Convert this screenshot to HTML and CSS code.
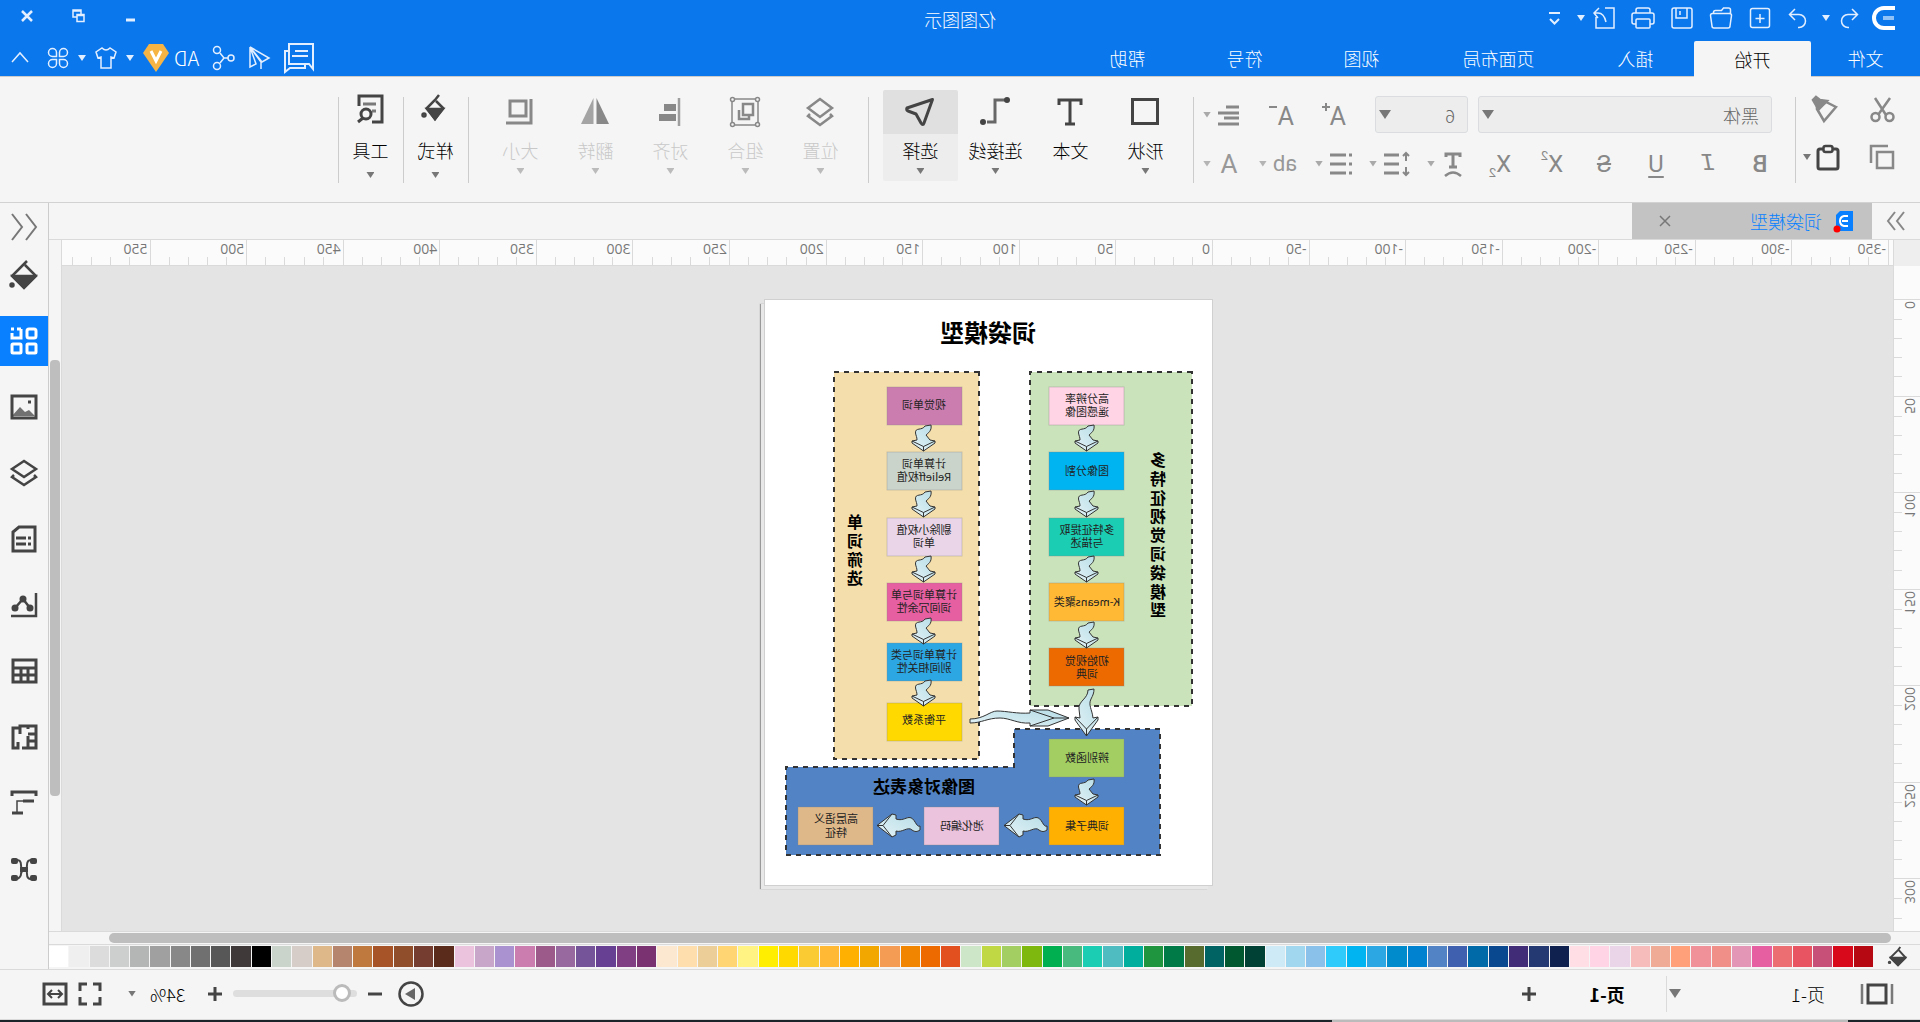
FILE: index.html
```html
<!DOCTYPE html>
<html lang="zh-CN">
<head>
<meta charset="utf-8">
<title>亿图图示</title>
<link rel="stylesheet" href="styles.css">
</head>
<body>
<div class="app">
  <header class="top">
    <div class="titlebar">
      <div class="quick">
        <svg class="ico logo" viewBox="0 0 24 24" width="24" height="24"><path d="M1 2h11a10 10 0 0 1 0 20H1" stroke-width="4"/><path d="M2 12h11" stroke-width="4" opacity=".55"/></svg>
        <button class="qb" aria-label="撤销"><svg class="ico" stroke-width="1.5" viewBox="0 0 24 24" width="24" height="24"><path d="M9 3L3.500 8.500 9 14M4 8.500h9a6.500 6.500 0 0 1 0 13h-1"/></svg></button>
        <button class="arr light" aria-label="撤销列表"></button>
        <button class="qb redo" aria-label="重做"><svg class="ico" stroke-width="1.5" viewBox="0 0 24 24" width="24" height="24"><path d="M15 3l5.500 5.500L15 14M20 8.500h-9a6.500 6.500 0 0 0 0 13h1"/></svg></button>
        <button class="qb" aria-label="新建"><svg class="ico" stroke-width="1.5" viewBox="0 0 24 24" width="24" height="24"><rect x="2.500" y="2.500" width="19" height="19" rx="2"/><path d="M12 8v9M7.500 12.500h9"/></svg></button>
        <button class="qb" aria-label="打开"><svg class="ico" stroke-width="1.5" viewBox="0 0 24 24" width="24" height="24"><path d="M2.500 8V4q0-2 2-2h5l2 2.500h6q2 0 2 2V8M3 20L1.500 9.500q0-2 2-2h17q2 0 2 2L21 20q0 2-2 2H5q-2 0-2-2z"/></svg></button>
        <button class="qb" aria-label="保存"><svg class="ico" stroke-width="1.5" viewBox="0 0 24 24" width="24" height="24"><rect x="2" y="2" width="20" height="20" rx="2"/><path d="M7 2v10h11V2M14 5v4"/></svg></button>
        <button class="qb" aria-label="打印"><svg class="ico" stroke-width="1.5" viewBox="0 0 24 24" width="24" height="24"><path d="M5 7V4q0-2 2-2h10q2 0 2 2v3M5 18H3q-2 0-2-2V9q0-2 2-2h18q2 0 2 2v7q0 2-2 2h-2"/><rect x="5" y="13" width="14" height="9" rx="1"/></svg></button>
        <button class="qb" aria-label="导出"><svg class="ico" stroke-width="1.5" viewBox="0 0 24 24" width="24" height="24"><path d="M11 2H2v20h18V11M22 7h-4q-6 0-8 9M17 2l5 5-4 5"/></svg></button>
        <button class="arr light" aria-label="导出列表"></button>
        <button class="qb last" aria-label="自定义"><svg class="ico" viewBox="0 0 24 24" width="24" height="24" stroke-width="2"><path d="M7 7h11M8 13l4.500 4.500L17 13"/></svg></button>
      </div>
      <h1 class="apptitle">亿图图示</h1>
      <div class="winbtns">
        <button aria-label="最小化"><svg class="ico" viewBox="0 0 16 16" width="16" height="16"><path d="M4 12h9" stroke-width="3"/></svg></button>
        <button aria-label="还原"><svg class="ico" viewBox="0 0 16 16" width="16" height="16" stroke-width="1.5"><path d="M6 6V2h8v7h-4M3 6.500h7v7H3zM3 7.500h7M6 3h8"/></svg></button>
        <button aria-label="关闭"><svg class="ico" viewBox="0 0 16 16" width="16" height="16"><path d="M3 3l10 10M13 3L3 13" stroke-width="2.500"/></svg></button>
      </div>
    </div>
    <div class="menurow">
      <nav class="tabs">
        <button>文件</button><button class="on">开始</button><button>插入</button><button class="wide">页面布局</button><button>视图</button><button>符号</button><button>帮助</button>
      </nav>
      <div class="tools">
        <button class="sp" aria-label="评论"><svg class="ico" viewBox="0 0 32 32" width="32" height="32" stroke-width="2"><path d="M2 2h24v20H6l-4 5zM7 9h13M7 14h16M26 9h4v21l-5-4H10v-4"/></svg></button>
        <button class="sp" aria-label="发送"><svg class="ico" viewBox="0 0 24 28" width="24" height="28" stroke-width="1.5"><path d="M21 3L2 14l7 4zM21 3v20l-6-3zM21 3L10 18v7"/></svg></button>
        <button class="sp" aria-label="分享"><svg class="ico" viewBox="0 0 24 28" width="24" height="28" stroke-width="1.5"><circle cx="4" cy="14" r="3"/><circle cx="18" cy="6" r="3.500"/><circle cx="18" cy="22" r="3.500"/><path d="M7 14h4l4-5M11 14l4 5"/></svg></button>
        <button class="ad">AD</button>
        <button aria-label="会员"><svg viewBox="0 0 28 28" width="28" height="28"><path d="M7 0h14l6 9-13 19L1 9z" fill="#f6b445"/><path d="M9 7l5 10 5-10" fill="none" stroke="#fff" stroke-width="3"/></svg></button>
        <button class="arr light" aria-label="会员列表"></button>
        <button aria-label="主题"><svg class="ico" viewBox="0 0 24 24" width="24" height="24" stroke-width="1.5"><path d="M8 2q4 4 8 0l6 4-2 6-3-1v11H7V11l-3 1-2-6z"/></svg></button>
        <button class="arr light" aria-label="主题列表"></button>
        <button class="apps" aria-label="应用"><svg class="ico" viewBox="0 0 24 24" width="24" height="24" stroke-width="1.5"><path d="M10.500 10.500H6.500a4 4 0 1 1 4-4zM13.500 10.500v-4a4 4 0 1 1 4 4zM10.500 13.500v4a4 4 0 1 1-4-4zM13.500 13.500h4a4 4 0 1 1-4 4z"/></svg></button>
        <button aria-label="收起"><svg class="ico" viewBox="0 0 20 20" width="20" height="20" stroke-width="1.5"><path d="M2 14l8-9 8 9"/></svg></button>
      </div>
    </div>
  </header>

  <div class="ribbon">
    <section class="clip">
      <button class="ib" aria-label="剪切"><svg class="ico" viewBox="0 0 26 26" width="26" height="26" stroke-width="2.500"><path d="M5 1l12 17M20 1L9 18"/><circle cx="5.500" cy="20" r="4"/><circle cx="19.500" cy="20" r="4"/></svg></button>
      <button class="ib" aria-label="格式刷"><svg class="ico" viewBox="0 0 28 28" width="28" height="28" stroke-width="2.500"><path d="M4 11l10-5 9 7-7 12z"/><path d="M13 5l7-1 4-3 3 3-3 5-2 5z" fill="currentColor"/></svg></button>
      <button class="ib" aria-label="复制"><svg class="ico" viewBox="0 0 26 26" width="26" height="26" stroke-width="2.500"><path d="M2 8h16v16H2z"/><path d="M7 2h17v17"/></svg></button>
      <button class="ib dark" aria-label="粘贴"><svg class="ico" viewBox="0 0 26 26" width="26" height="26" stroke-width="3"><rect x="3" y="5" width="20" height="20" rx="2"/><rect x="8.500" y="2" width="9" height="6" rx="2" fill="#f5f5f5" stroke-width="2.500"/></svg><span class="arr"></span></button>
    </section>
    <section class="font">
      <div class="frow">
        <label class="combo fam"><select aria-label="字体"><option>黑体</option></select></label>
        <label class="combo size"><select aria-label="字号"><option>6</option></select></label>
        <button class="tb" aria-label="增大字号"><svg class="ico" viewBox="0 0 28 28" width="28" height="28"><text x="3" y="24" class="let">A</text><path d="M19 6h8M23 2v8"/></svg></button>
        <button class="tb" aria-label="减小字号"><svg class="ico" viewBox="0 0 28 28" width="28" height="28"><text x="3" y="24" class="let">A</text><path d="M20 6h8"/></svg></button>
        <button class="split gap" aria-label="对齐文本"><svg class="ico" viewBox="0 0 24 24" width="24" height="24" stroke-width="3"><path d="M2 4h13M2 10h21M2 15h15M2 21h21"/></svg><span class="arr"></span></button>
      </div>
      <div class="frow">
        <button class="tb bold">B</button>
        <button class="tb ital">I</button>
        <button class="tb und">U</button>
        <button class="tb strike">S</button>
        <button class="tb">X<sup>2</sup></button>
        <button class="tb">X<sub>2</sub></button>
        <button class="split tsp" aria-label="文字效果"><svg class="ico" viewBox="0 0 24 28" width="24" height="28"><path d="M5 7V4h14v3M12 4v13M8 17h8" stroke-width="3"/><path d="M4 26q8-7 16 0" stroke-width="2.500"/></svg><span class="arr"></span></button>
        <button class="split" aria-label="行距"><svg class="ico" viewBox="0 0 28 28" width="28" height="28"><path d="M12 5h15M12 14h15M12 23h15" stroke-width="3"/><path d="M5 3v8M2 6l3-3 3 3M5 25v-8M2 22l3 3 3-3"/></svg><span class="arr"></span></button>
        <button class="split" aria-label="项目符号"><svg class="ico" viewBox="0 0 24 28" width="24" height="28" stroke-width="3"><path d="M1 5h3M1 14h3M1 23h3M7 5h16M7 14h16M7 23h16"/></svg><span class="arr"></span></button>
        <button class="split lite"><span>ab</span><span class="arr"></span></button>
        <button class="split lite"><span class="biga">A</span><span class="arr"></span></button>
      </div>
    </section>
    <section class="bigs dark">
      <button><svg class="ico" viewBox="0 0 30 30" width="30" height="30" stroke-width="3"><path d="M2.500 2.500h25v24h-25z"/></svg><span>形状</span><i class="arr"></i></button>
      <button><svg class="ico" viewBox="0 0 30 30" width="30" height="30" stroke-width="3"><path d="M4 8V3h22v5M15 3v24M10 27h10"/></svg><span>文本</span></button>
      <button><svg class="ico" viewBox="0 0 30 30" width="30" height="30"><path d="M5 3h10v22h8" opacity=".8" stroke-width="3"/><circle cx="3" cy="3" r="3" fill="currentColor" stroke="none"/><circle cx="27" cy="25" r="3" fill="currentColor" stroke="none"/></svg><span>连接线</span><i class="arr"></i></button>
      <button class="on"><svg class="ico" viewBox="0 0 30 30" width="30" height="30" stroke-width="3"><path d="M2.500 2.500L28 11q1 2-1 3l-8 3-5 9q-2 3-3 0z" stroke-linejoin="round"/></svg><span>选择</span><i class="arr"></i></button>
    </section>
    <section class="bigs faint">
      <button><svg class="ico" viewBox="0 0 30 30" width="30" height="30" stroke-width="2.500"><path d="M15 2L27 11 15 20 3 11z"/><path d="M5 17l-2 2 12 9 12-9-2-2"/></svg><span>位置</span><i class="arr"></i></button>
      <button><svg class="ico" viewBox="0 0 30 30" width="30" height="30"><path d="M2 2h26v26H2z" stroke-width="1.500"/><path d="M7 7h10v11H7z" stroke-width="2.500"/><path d="M21 13v9H11v-3" stroke-width="2.500"/><g fill="#f5f5f5" stroke-width="1.500"><circle cx="2.500" cy="2.500" r="2"/><circle cx="27.500" cy="2.500" r="2"/><circle cx="2.500" cy="27.500" r="2"/><circle cx="27.500" cy="27.500" r="2"/></g></svg><span>组合</span><i class="arr"></i></button>
      <button><svg class="ico" viewBox="0 0 30 30" width="30" height="30"><path d="M6 1v28" opacity=".8" stroke-width="2.500"/><path d="M9 7h12v7H9zM9 17h17v7H9z" fill="currentColor" stroke="none"/></svg><span>对齐</span><i class="arr"></i></button>
      <button><svg viewBox="0 0 30 30" width="30" height="30" fill="currentColor"><path d="M1 27L13.500 1v26z"/><path d="M29 27L16.500 1v26z" opacity=".75"/></svg><span>翻转</span><i class="arr"></i></button>
      <button><svg class="ico" viewBox="0 0 30 30" width="30" height="30" stroke-width="3"><path d="M9 4h16v15H9z"/><path d="M4 2v24h25"/></svg><span>大小</span><i class="arr"></i></button>
    </section>
    <section class="bigs dark slim">
      <button><svg class="ico" viewBox="0 0 30 30" width="30" height="30" stroke-width="2.500"><path d="M11 1l4 5 8 8-8 11-8-11 7-7"/><path d="M7 15l8 10 8-10z" fill="currentColor"/><circle cx="26" cy="21" r="1.500"/></svg><span>样式</span><i class="arr"></i></button>
    </section>
    <section class="bigs dark slim">
      <button><svg class="ico" viewBox="0 0 30 30" width="30" height="30" stroke-width="3"><path d="M26 12V2H3v26h10"/><path d="M9 10h13M9 17h4" opacity=".7"/><circle cx="19" cy="20" r="5"/><path d="M22 24l5 4"/></svg><span>工具</span><i class="arr"></i></button>
    </section>
  </div>

  <div class="middle">
    <main class="work">
      <div class="doctabs">
        <button class="fold" aria-label="展开"><svg class="ico" viewBox="0 0 20 20" width="20" height="20"><path d="M2 1l7 9-7 9M11 1l7 9-7 9" stroke-width="2"/></svg></button>
        <div class="doctab">
          <svg viewBox="0 0 20 22" width="20" height="22"><path d="M1 1h13l4 4v16H1z" fill="#0880ff"/><path d="M6 6h4q4 1 4 5t-4 5H6M6 11h6" fill="none" stroke="#fff" stroke-width="2"/><circle cx="17" cy="19" r="3.500" fill="#f00"/></svg>
          <span>词袋模型</span>
          <button aria-label="关闭文档"><svg class="ico" viewBox="0 0 12 12" width="12" height="12"><path d="M1 1l10 10M11 1L1 11" stroke-width="1.500"/></svg></button>
        </div>
      </div>
      <div class="rulerrow"><div class="corner"></div><div class="hruler"></div><div class="sbtop"></div></div>
      <div class="canvasrow">
        <div class="vruler"></div>
        <div class="canvas">
          <div class="page">
            <svg class="diagram" viewBox="0 0 447 585" width="447" height="585">
              <defs>
                <linearGradient id="g" x1="0" y1="0" x2="1" y2="1"><stop offset="0" stop-color="#b6dce6"/><stop offset="1" stop-color="#e4f3f7"/></linearGradient>
                <g id="down" class="arrow"><path d="M4 0l6 1c3 5 10 1 9.500 7-.5 3-1.500 4-1.500 7l5 1v2l-11.500 8L0 18v-2l5-1 4-5C7 8 3 6 4 0z"/><path d="M0 16l11.500 5.500L23 16M11.500 21.500V26"/></g>
                <g id="right" class="arrow"><path d="M0 12c4 2 5-9 11-8.500 4 .5 7 3.500 13 1.500V1l4-1 15 11.500L28 23l-4-2v-4c-6 2-12-5-16-1-3 2-5 2-8 0z"/><path d="M28 0l9 11.500L28 23M37 11.500h6"/></g>
              </defs>
              <g class="region">
                <rect x="20" y="72" width="162" height="334" fill="#cae3ba"/>
                <rect x="233" y="72" width="145" height="387" fill="#f4dfac"/>
                <path d="M52 429h146v38h228v88H52z" fill="#5283c4"/>
              </g>
              <g class="node">
                <rect x="88" y="87" width="75" height="38" fill="#ffd4e5"/>
                <rect x="88" y="152" width="75" height="38" fill="#00b4f1"/>
                <rect x="88" y="218" width="75" height="38" fill="#1bcdb2"/>
                <rect x="88" y="283" width="75" height="38" fill="#ffb934"/>
                <rect x="88" y="348" width="75" height="38" fill="#ec6a00"/>
                <rect x="88" y="439" width="75" height="38" fill="#a3cf62"/>
                <rect x="88" y="507" width="75" height="38" fill="#ffb000"/>
                <rect x="250" y="87" width="75" height="38" fill="#cb7db0"/>
                <rect x="250" y="152" width="75" height="38" fill="#cad4cb"/>
                <rect x="250" y="218" width="75" height="38" fill="#ead5e8"/>
                <rect x="250" y="283" width="75" height="38" fill="#e65fa0"/>
                <rect x="250" y="343" width="75" height="38" fill="#2ca7e3"/>
                <rect x="250" y="403" width="75" height="38" fill="#ffd900"/>
                <rect x="213" y="507" width="75" height="38" fill="#ecc3dc"/>
                <rect x="339" y="507" width="75" height="38" fill="#dfb88a"/>
              </g>
              <use href="#down" x="114" y="125"/><use href="#down" x="114" y="191"/><use href="#down" x="114" y="256"/><use href="#down" x="114" y="322"/><use href="#down" x="114" y="479"/>
              <use href="#down" x="277" y="125"/><use href="#down" x="277" y="191"/><use href="#down" x="277" y="256"/><use href="#down" x="277" y="318"/><use href="#down" x="277" y="380"/>
              <use href="#right" x="165" y="514"/><use href="#right" x="292" y="514"/>
              <g class="arrow"><path d="M118 389l6 1c0 9 10 11 9 19l-1 9 5-1v3l-11.500 16L114 420v-3l5 1c1-9 5-13 2-19-2-4-3-6-3-10z"/><path d="M114 417l11.500 12 11.500-12M125.500 429v7"/></g>
              <g class="arrow"><path d="M143 418l21-8h18v3c13 1 23-2 33-2 7 0 13 8 27 8v4c-12 0-17-5-30-5-10 0-18 6-30 5v3h-18z"/><path d="M182 410l-24 8 24 8M143 418h15"/></g>
              <text class="t24" x="224" y="42">词袋模型</text>
              <g class="t16">
                <text x="54" y="166">多</text><text x="54" y="185">特</text><text x="54" y="204">征</text><text x="54" y="222">视</text><text x="54" y="241">觉</text><text x="54" y="260">词</text><text x="54" y="279">袋</text><text x="54" y="298">模</text><text x="54" y="316">型</text>
                <text x="357" y="228">单</text><text x="357" y="247">词</text><text x="357" y="266">筛</text><text x="357" y="284">选</text>
              </g>
              <text class="t17" x="288" y="493">图像对象表达</text>
              <g class="t11">
                <text x="125" y="103">高分辨率</text><text x="125" y="116">遥感图像</text>
                <text x="125" y="175">图像分割</text>
                <text x="125" y="234">多特征提取</text><text x="125" y="247">与描述</text>
                <text x="125" y="306">K-means聚类</text>
                <text x="125" y="365">初始视觉</text><text x="125" y="378">词典</text>
                <text x="125" y="462">辨别函数</text>
                <text x="125" y="530">词典子集</text>
                <text x="288" y="109">视觉单词</text>
                <text x="288" y="168">计算单词</text><text x="288" y="181">Relieff权值</text>
                <text x="288" y="234">剔除小权值</text><text x="288" y="247">单词</text>
                <text x="288" y="299">计算单词与单</text><text x="288" y="312">词间冗余性</text>
                <text x="288" y="359">计算单词与类</text><text x="288" y="372">别间相关性</text>
                <text x="288" y="424">平衡系数</text>
                <text x="250" y="530">池化编码</text>
                <text x="376" y="523">高层语义</text><text x="376" y="537">特征</text>
              </g>
            </svg>
          </div>
        </div>
        <div class="vscroll"><div class="vthumb"></div></div>
      </div>
      <div class="hscroll"><div class="hthumb"></div></div>
      <div class="palette">
        <svg class="ico bucket" viewBox="0 0 26 26" width="20" height="24" stroke-width="2.500"><path d="M10 0l3 4 10 10-10 10L3 14 12 4"/><path d="M4 14l9 9 9-9z" fill="currentColor"/><circle cx="24" cy="20" r="1"/></svg>
        <div class="swatches"></div>
      </div>
    </main>
    <aside class="side">
      <button class="fold2" aria-label="折叠面板"><svg class="ico" viewBox="0 0 28 28" width="28" height="28" stroke-width="2"><path d="M12 1L2 14l10 13M26 1L16 14l10 13"/></svg></button>
      <button class="sb" aria-label="填充"><svg class="ico" viewBox="0 0 28 28" width="28" height="28" stroke-width="2.500"><path d="M11 0l4 4 11 11-12 12L2 15 13 4"/><path d="M3 15h22L14 26z" fill="currentColor"/><circle cx="26" cy="24" r="1.500" fill="currentColor"/></svg></button>
      <button class="sb on" aria-label="符号库"><svg class="ico" viewBox="0 0 28 28" width="28" height="28" stroke-width="3"><rect x="2" y="2" width="9" height="9" rx="2"/><rect x="2" y="17" width="9" height="9" rx="1"/><rect x="17" y="17" width="9" height="9" rx="1"/><path d="M17 2v9h9V6M17 2h4M24 2h3"/></svg></button>
      <button class="sb" aria-label="图片"><svg class="ico" viewBox="0 0 28 28" width="28" height="28" stroke-width="3"><path d="M2 3h24v22H2z"/><path d="M3 23l6-6 4 2 5-5 8 9z" fill="currentColor" stroke="none" opacity=".75"/><path d="M7 9h3"/></svg></button>
      <button class="sb" aria-label="图层"><svg class="ico" viewBox="0 0 28 28" width="28" height="28" stroke-width="2.500"><path d="M14 2l12 8-12 8L2 10zM4 16l-2 2 12 8 12-8-2-2"/></svg></button>
      <button class="sb" aria-label="备注"><svg class="ico" viewBox="0 0 28 28" width="28" height="28" stroke-width="3"><path d="M3 2h16l6 5v19H3zM7 13h3M7 19h3M12 13h10M12 19h10"/></svg></button>
      <button class="sb" aria-label="图表"><svg class="ico" viewBox="0 0 28 28" width="28" height="28" stroke-width="2.500"><path d="M2 2v23h25M8 17l7-9 8 9"/><g fill="currentColor" stroke="none"><circle cx="8" cy="17" r="3.500"/><circle cx="15" cy="8" r="3.500"/><circle cx="23" cy="17" r="3.500"/></g></svg></button>
      <button class="sb" aria-label="表格"><svg class="ico" viewBox="0 0 28 28" width="28" height="28" stroke-width="3"><path d="M2 3h23v22H2zM2 11h23M2 18h23M10 11v14M17 11v14"/></svg></button>
      <button class="sb" aria-label="平面图"><svg class="ico" viewBox="0 0 28 28" width="28" height="28" stroke-width="3"><path d="M16 25H2V3h16v8M18 5h7v20h-5v-6M2 11h8M10 3v3M2 18h8v7M10 13v5"/></svg></button>
      <button class="sb" aria-label="甘特图"><svg class="ico" viewBox="0 0 28 28" width="28" height="28" stroke-width="3"><path d="M2 7V3h24v4M4 12h11M15 24h11"/><path d="M15 12h6v12" stroke-width="1.500"/></svg></button>
      <button class="sb" aria-label="思维导图"><svg class="ico" viewBox="0 0 28 28" width="28" height="28"><path d="M7 5q4 0 4 5t3 5 3-5 4-5M7 24q4 0 4-5t3-4 3 4 4 5M10 14h8"/><g fill="currentColor" stroke="none"><rect x="1" y="3" width="7" height="6" rx="2"/><rect x="20" y="3" width="7" height="6" rx="2"/><rect x="1" y="20" width="7" height="6" rx="2"/><rect x="20" y="20" width="7" height="6" rx="2"/><rect x="10" y="12" width="8" height="5"/></g></svg></button>
    </aside>
  </div>

  <footer class="status">
    <div class="pages">
      <button class="view" aria-label="页面视图"><svg class="ico" viewBox="0 0 34 24" width="34" height="24" stroke-width="3"><path d="M8 3h18v18H8z"/><path d="M2 2v20M32 2v20" stroke-width="2.500" opacity=".7"/></svg></button>
      <button class="pagesel"><span>页-1</span><i class="arr big"></i></button>
      <button class="pagetab">页-1</button>
      <button class="add" aria-label="添加页面"><svg class="ico" viewBox="0 0 16 16" width="16" height="16" stroke-width="3"><path d="M8 1v14M1 8h14"/></svg></button>
    </div>
    <div class="zoom">
      <button aria-label="演示"><svg class="ico" viewBox="0 0 26 26" width="26" height="26" stroke-width="2.500"><circle cx="13" cy="13" r="11.500"/><path d="M9 7l10 6-10 6z" fill="currentColor" stroke="none" opacity=".8"/></svg></button>
      <button class="minus" aria-label="缩小"><svg class="ico" viewBox="0 0 16 16" width="16" height="16" stroke-width="3"><path d="M1 8h14"/></svg></button>
      <input type="range" min="0" max="100" value="6" aria-label="缩放">
      <button aria-label="放大"><svg class="ico" viewBox="0 0 16 16" width="16" height="16" stroke-width="3"><path d="M8 1v14M1 8h14"/></svg></button>
      <button class="pct"><span>34%</span><i class="arr"></i></button>
      <button class="full" aria-label="全屏"><svg class="ico" viewBox="0 0 24 24" width="24" height="24" stroke-width="3"><path d="M2 9V2h7M15 2h7v7M22 15v7h-7M9 22H2v-7"/></svg></button>
      <button aria-label="适合宽度"><svg class="ico" viewBox="0 0 26 24" width="26" height="24" stroke-width="3"><path d="M2 2h22v20H2z"/><path d="M6 12h14M10 8l-4 4 4 4M16 8l4 4-4 4" stroke-width="2"/></svg></button>
    </div>
  </footer>
  <div class="taskbar"><div></div></div>
</div>
<script src="app.js"></script>
</body>
</html>
```
FILE: app.js
```js
const cells = (from, count, box) => {
  for (let i = 0; i < count; i++) {
    const cell = document.createElement('div');
    cell.className = 'cell';
    cell.innerHTML = '<i></i><i></i><i></i><i></i><i></i>';
    const label = document.createElement('span');
    label.textContent = from + i * 50;
    cell.append(label);
    box.append(cell);
  }
};
cells(-350, 19, document.querySelector('.hruler'));
cells(0, 7, document.querySelector('.vruler'));

const colors = ('b50812 d8091b c75078 e85461 ec6d72 e65fa0 e396b5 f08e88 f09199 ffa07a f0ab96 f6bcbb ead5e8 ffd4e5 ffdfe5 ' +
  '0f214f 243871 412c78 09488f 0069a8 3f60ae 5283c4 0082d1 008bcc 2ca7e3 00b4f1 2ecbfb 8ac1ea a2d8ef ceeaf6 ' +
  '004136 005830 006363 576b2f 007a47 1e953e 00ae9d 4fbcc2 1bcdb2 48ba7d 00b050 7eb80f a3cf62 bfd843 cde6c7 ' +
  'e3501f ec6a00 f18500 f49b54 f2a600 ffb000 ffb934 fbcb34 ffd900 ffee00 fff384 ffd573 ecce99 ffdeae fce8d0 ' +
  '7a3271 813f83 674094 75549a 98699f 9c5a8b cb7db0 aa92d0 c8a6ca ecc3dc 5a2a1a 753c30 914e2b a75528 bf793f ' +
  'b5866d dfb88a d6ccc8 cad4cb 000000 3f3939 575757 707070 888888 9fa09f b4b5b5 cdcfce dcdcdc efefef ffffff').split(' ');
const palette = document.querySelector('.swatches');
for (const color of colors) {
  const swatch = document.createElement('i');
  swatch.style.background = '#' + color;
  palette.append(swatch);
}
```
FILE: styles.css
```css
* { box-sizing: border-box; }
body { margin: 0; background: #f5f5f5; }
/* The whole window is shown as a mirror image. */
.app {
  display: flex; flex-direction: column; min-height: 100vh;
  transform: scaleX(-1);
  font: 300 18px/24px "Noto Sans CJK SC", sans-serif; color: #000; background: #f5f5f5;
}
button { margin: 0; padding: 0; border: 0; background: none; color: inherit; font: inherit; display: flex; align-items: center; justify-content: center; flex: none; }
svg { display: block; flex: none; overflow: visible; }
.ico { fill: none; stroke: currentColor; }
.ico:not([stroke-width]) { stroke-width: 2; }
.arr { flex: none; width: 8px; height: 6px; background: #777; clip-path: polygon(0 0, 100% 0, 50% 100%); }
.arr.light { background: #e0eeff; }
.arr.big { width: 12px; height: 9px; }

.top { background: #0a77ed; color: #e3efff; border-bottom: 1px solid #ccc; }
.titlebar { display: grid; grid-template-columns: 1fr auto 1fr; height: 40px; }
.quick { display: flex; align-items: center; height: 36px; padding-left: 24px; }
.quick .qb { width: 39px; }
.logo { color: #fff; margin-right: 3px; }
.quick .redo { width: 36px; margin-left: 6px; }
.quick .last { margin-left: 2px; }
.apptitle { margin: 0; font: inherit; line-height: 38px; color: #fff; }
.winbtns { display: flex; gap: 36px; justify-content: flex-end; align-items: center; height: 32px; padding-right: 19px; }
.menurow { display: flex; justify-content: space-between; height: 36px; }
.tabs { display: flex; color: #fff; }
.tabs button { width: 117px; height: 36px; }
.tabs button:first-child { width: 109px; }
.tabs .wide { width: 157px; }
.tabs .on { background: #f5f5f5; color: #000; border-radius: 2px 2px 0 0; margin: 1px 0 -1px; }
.tools { display: flex; align-items: center; gap: 8px; padding-right: 10px; }
.tools .sp { margin-right: 4px; }
.tools .apps { margin-right: 8px; }
.ad { color: #fff; margin-right: -4px; font-size: 20px; }

.ribbon { display: flex; height: 126px; padding-top: 13px; border-bottom: 1px solid #d2d2d2; color: #888; }
.ribbon section { position: relative; height: 93px; }
.ribbon section::after { content: ""; position: absolute; right: 0; top: 7px; bottom: 0; border-right: 1px solid #ccc; }
.clip { width: 125px; display: grid; grid-template-columns: 60px 52px; grid-template-rows: 40px 54px; padding-left: 8px; }
.clip .ib { gap: 4px; }
.clip .arr { margin-right: -8px; }
.dark { color: #444; }
.font { width: 602px; padding-left: 9px; }
.frow { display: flex; align-items: center; height: 49px; }
.combo { position: relative; margin-left: 14px; width: 294px; height: 37px; }
.combo::after { content: ""; position: absolute; right: 4px; top: 14px; width: 12px; height: 9px; background: #777; clip-path: polygon(0 0, 100% 0, 50% 100%); }
.combo select { appearance: none; width: 100%; height: 37px; padding: 0 12px; border: 1px solid #dadce0; border-radius: 3px; background: #ededed; font: inherit; color: #666; }
.combo.size { width: 93px; margin: 0 14px 0 10px; }
.tb { width: 52px; height: 40px; font: 400 24px/28px Roboto, sans-serif; }
.tb sup, .tb sub { font-size: 13px; line-height: 14px; align-self: flex-start; margin-top: 5px; }
.tb sub { align-self: flex-end; margin: 0 0 4px; }
.let { font: 400 25px Roboto, sans-serif; fill: currentColor; stroke: none; text-anchor: start; }
.bold { font-weight: 500; }
.ital { font-family: "Liberation Mono", monospace; font-style: italic; }
.und { text-decoration: underline; text-underline-offset: 4px; }
.strike { text-decoration: line-through; }
.split { width: 56px; height: 40px; gap: 6px; font: 400 22px/28px Roboto, sans-serif; }
.split .arr { opacity: .6; }
.split.gap { margin-left: 7px; }
.lite { opacity: .85; }
.biga { font-size: 26px; width: 24px; }
.bigs { display: flex; font-size: 18px; padding: 0 15px 0 10px; }
.bigs button { width: 75px; height: 91px; flex-direction: column; justify-content: flex-start; padding-top: 7px; color: inherit; }
.bigs button span { margin-top: 11px; color: #000; line-height: 24px; }
.bigs .arr { margin-top: 6px; }
.bigs .on { background: linear-gradient(#e0e0e0 44px, #ededed 44px); border-radius: 2px; }
.faint button span { color: #c8c8c8; }
.faint .arr { background: #bbb; }
.faint { color: #888; }
.bigs.slim { padding: 0; }
.slim button { width: 65px; padding-top: 4px; }
.slim button span { margin-top: 14px; }
.slim .arr { margin-top: 10px; }

.middle { flex: 1; display: flex; min-height: 0; }
.work { flex: 1; min-width: 0; display: flex; flex-direction: column; }
.doctabs { display: flex; height: 37px; border-bottom: 1px solid #dadada; }
.fold { width: 48px; color: #888; }
.doctab { width: 240px; display: flex; align-items: center; padding: 0 27px 0 18px; background: #c3c3c3; color: #0880ff; }
.doctab span { margin-left: 12px; flex: 1; }
.doctab button { color: #777; }
.rulerrow { display: flex; height: 26px; }
.corner { width: 26px; background: #eee; }
.hruler { flex: 1; min-width: 0; display: grid; grid-template-columns: repeat(19, calc((100% + 8px) / 19)); padding-left: 4px; overflow: hidden; background: #fbfbfb; border: 1px solid #dadada; border-width: 0 1px 1px; }
.cell { position: relative; display: grid; font: 400 14px/20px "Open Sans", sans-serif; color: #777; }
.cell span { position: absolute; }
.hruler .cell { grid-template-columns: repeat(5, 1fr); align-items: end; border-left: 1px solid #dadada; }
.hruler i { height: 8px; border-left: 1px solid #dadada; }
.cell i:first-child { border-color: transparent; }
.hruler span { left: 2px; top: -1px; }
.sbtop { width: 12px; }
.canvasrow { flex: 1; display: flex; min-height: 0; }
.vruler { width: 27px; height: 665px; display: grid; grid-template-rows: repeat(7, calc((100% + 44px) / 7)); padding-top: 33px; overflow: hidden; background: #fbfbfb; border-right: 1px solid #dadada; }
.vruler .cell { grid-template-rows: repeat(5, 1fr); justify-items: end; border-top: 1px solid #dadada; }
.vruler i { width: 8px; border-top: 1px solid #dadada; }
.vruler span { left: 0; top: 1px; writing-mode: vertical-rl; transform: rotate(180deg); }
.canvas { flex: 1; min-width: 0; background: #e4e4e4; padding: 34px 23px 46px 0; }
.page { width: 447px; margin: 0 auto; background: #fff; outline: 1px solid #d0d0d0; box-shadow: 4px 4px 0 0 #e8e8e8, 5px 4px 1px 0 #999; }
.region { stroke: #333; stroke-width: 2; stroke-dasharray: 5 5; }
.node { stroke: #888; stroke-opacity: .35; }
.arrow path { stroke: #333; fill: none; }
.arrow path:first-child { fill: url(#g); }
.diagram text { text-anchor: middle; }
.t24 { font-size: 24px; font-weight: 700; }
.t17 { font-size: 17px; font-weight: 700; }
.t16 { font-size: 16px; font-weight: 700; }
.t11 { font-size: 11px; font-weight: 400; fill: #222; }
.vscroll { width: 13px; padding: 94px 1px 0; border-left: 1px solid #dadada; }
.vthumb { height: 436px; border-radius: 4px; background: #bebebe; }
.hscroll { height: 14px; padding: 1px 60px 1px 29px; border: 1px solid #dadada; border-width: 1px 0; }
.hthumb { height: 10px; border-radius: 5px; background: #bebebe; }
.palette { display: flex; height: 24px; align-items: flex-start; }
.bucket { margin: 0 15px 0 12px; color: #444; }
.swatches { flex: 1; display: grid; grid-template-columns: repeat(90, 1fr); gap: 1px; height: 21px; margin-top: 1px; }

.side { width: 49px; border-left: 1px solid #ccc; color: #444; }
.fold2 { width: 48px; height: 47px; color: #777; }
.sb { width: 48px; height: 50px; margin-bottom: 16px; }
.sb.on { background: #0880ff; color: #fff; }

.status { display: flex; justify-content: space-between; height: 51px; border: 1px solid #dadada; border-width: 1px 0; }
.pages, .zoom { display: flex; align-items: center; color: #444; height: 47px; }
.pages { padding-left: 26px; }
.pagesel { width: 194px; height: 36px; padding: 0 2px 0 35px; justify-content: space-between; border-right: 1px solid #dadada; color: #000; }
.pagetab { width: 118px; font-weight: 700; color: #000; }
.add { width: 38px; }
.zoom { padding-right: 42px; gap: 10px; }
.minus { margin-left: 5px; }
.zoom input { appearance: none; width: 124px; height: 18px; margin: 0; background: none; }
.zoom input::-webkit-slider-runnable-track { height: 7px; border-radius: 4px; background: #dedede; }
.zoom input::-webkit-slider-thumb { appearance: none; width: 18px; height: 18px; margin-top: -6px; border: 3px solid #bbb; border-radius: 9px; background: #fff; }
.pct { gap: 14px; margin-left: 12px; color: #000; }
.full { margin: 0 0 0 16px; }
.taskbar { height: 2px; padding-left: 72px; background: #1b2428; }
.taskbar div { width: 516px; height: 2px; background: #bbb; }
```
